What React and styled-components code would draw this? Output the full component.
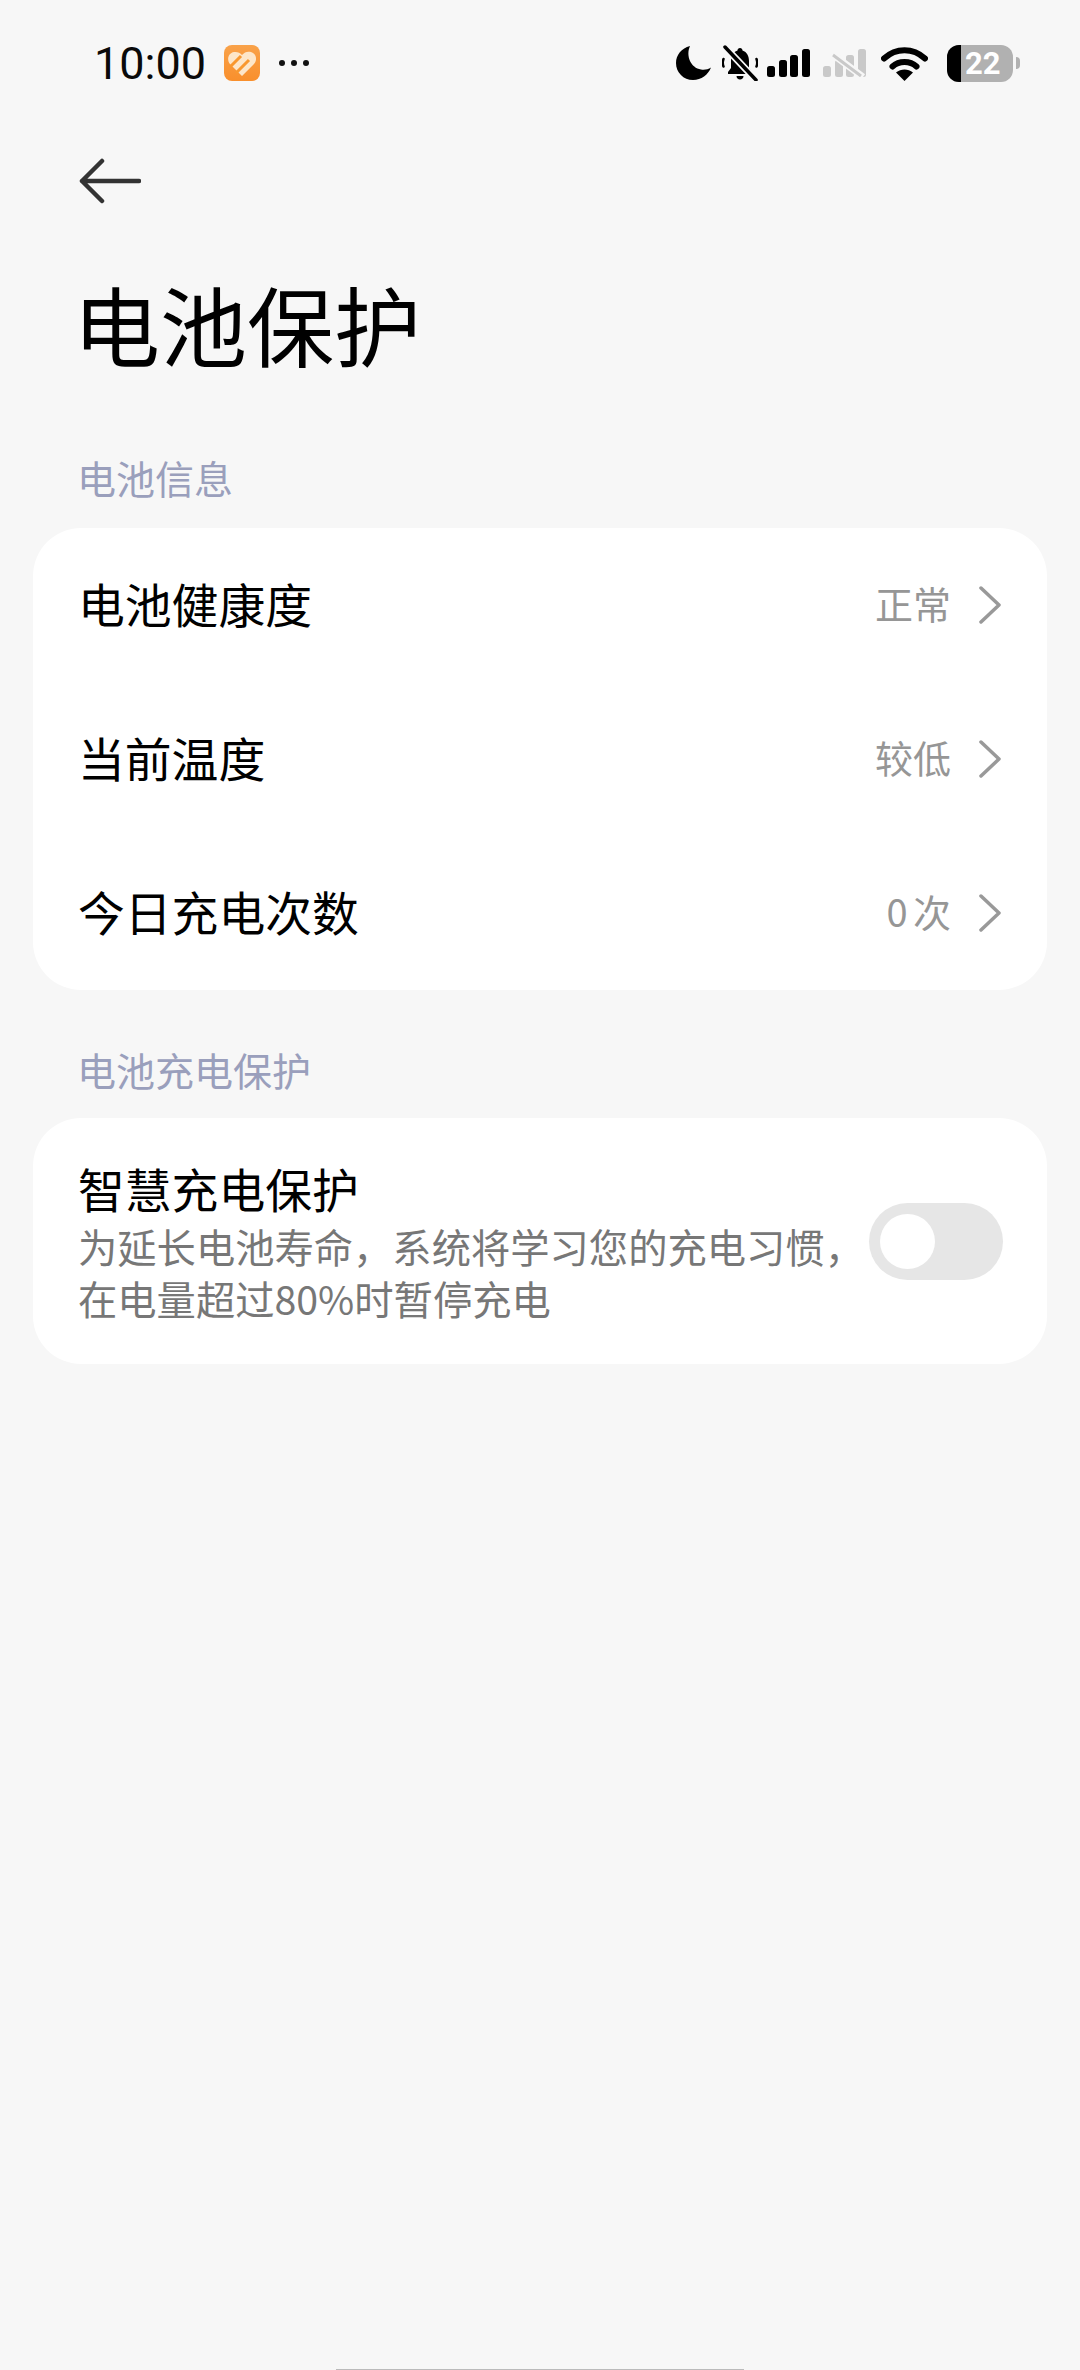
import styled, { createGlobalStyle } from 'styled-components';

const cjk = `"Noto Sans CJK SC", "Noto Sans", sans-serif`;

const GlobalStyle = createGlobalStyle`
  html, body {
    margin: 0;
    padding: 0;
    background: #f7f7f7;
  }
  * {
    box-sizing: border-box;
  }
`;

const Page = styled.div`
  position: relative;
  width: 1080px;
  height: 2370px;
  overflow: hidden;
  background: #f7f7f7;
  font-family: ${cjk};
`;

const StatusBar = styled.div`
  display: flex;
  align-items: center;
  height: 126px;
  padding: 0 60px 0 94px;
`;

const Clock = styled.span`
  font-family: Roboto, sans-serif;
  font-size: 45px;
  line-height: 1;
  color: #0a0a0a;
  width: 130px;
`;

const StatusRight = styled.div`
  display: flex;
  align-items: center;
  margin-left: auto;
`;

const StatusIcon = styled.svg`
  display: block;
  flex: none;
  margin-left: ${(p) => p.$gap || 0}px;
`;

const BatteryWrap = styled.div`
  display: flex;
  align-items: center;
  margin-left: 19px;
`;

const BatteryBody = styled.div`
  display: flex;
  width: 66px;
  height: 37px;
  border-radius: 12px;
  overflow: hidden;
  background: #b1b1b1;
`;

const BatteryLevel = styled.div`
  width: 14px;
  background: #000;
`;

const BatteryText = styled.span`
  font-family: Roboto, sans-serif;
  font-weight: 700;
  font-size: 31px;
  line-height: 37px;
  color: #fff;
  margin-left: 4px;
`;

const BatteryTip = styled.div`
  width: 4px;
  height: 12px;
  margin-left: 3px;
  background: #b1b1b1;
  border-radius: 0 6px 6px 0;
`;

const NavBar = styled.div`
  display: flex;
  align-items: center;
  height: 110px;
  padding-left: 79px;
`;

const Title = styled.h1`
  margin: 0;
  padding-left: 73px;
  height: 180px;
  font-size: 87px;
  line-height: 174px;
  font-weight: 400;
  color: #000;
`;

const SectionLabel = styled.div`
  padding: ${(p) => p.$top}px 0 ${(p) => p.$bottom}px 77px;
  font-size: 39px;
  line-height: 52px;
  color: #9a9fbc;
`;

const Card = styled.div`
  margin: 0 33px;
  background: #fff;
  border-radius: 48px;
`;

const Row = styled.div`
  display: flex;
  align-items: center;
  height: 154px;
  padding: 0 45px 0 45px;
`;

const RowTitle = styled.span`
  margin-bottom: 5px;
  font-size: 46.8px;
  line-height: 60px;
  color: #000;
`;

const RowValue = styled.span`
  margin-left: auto;
  margin-bottom: 5px;
  font-size: 38px;
  line-height: 52px;
  word-spacing: -3px;
  color: #969696;
`;

const Chevron = styled.svg`
  display: block;
  flex: none;
  margin-left: 27px;
`;

const ToggleRow = styled.div`
  display: flex;
  align-items: center;
  height: 246px;
  padding: 0 44px 0 45px;
`;

const ToggleText = styled.div`
  flex: 1;
  min-width: 0;
`;

const ToggleTitle = styled(RowTitle)`
  display: block;
  margin-bottom: 0;
`;

const ToggleDesc = styled.div`
  margin-top: 2px;
  font-size: 39.3px;
  line-height: 52px;
  color: #777;
`;

const Toggle = styled.div`
  display: flex;
  align-items: center;
  flex: none;
  width: 134px;
  height: 77px;
  padding-left: 11px;
  border-radius: 39px;
  background: #e6e6e6;
`;

const Knob = styled.div`
  width: 55px;
  height: 55px;
  border-radius: 50%;
  background: #fff;
`;

const GestureBar = styled.div`
  position: absolute;
  left: 336px;
  bottom: 0;
  width: 408px;
  height: 1px;
  background: #bbb;
`;

const HealthIcon = () => (
  <StatusIcon width="36" height="36" viewBox="0 0 36 36">
    <defs>
      <linearGradient id="healthBg" x1="0" y1="0" x2="0" y2="1">
        <stop offset="0" stopColor="#f9a24a" />
        <stop offset="1" stopColor="#f98f2c" />
      </linearGradient>
    </defs>
    <rect width="36" height="36" rx="8" fill="url(#healthBg)" />
    <path d="M18 31L6 19C2.500 15 4 8 10 7c3-.5 6 .5 8 3 2.500-3 5.500-4 9-3 5.500 1.500 6.500 8 3 12z" fill="#fde6c9" />
    <path d="M6 22L17 11M12 28L25 15" stroke="#f9982f" strokeWidth="3" fill="none" />
  </StatusIcon>
);

const MoreDots = () => (
  <StatusIcon $gap={18} width="32" height="8" viewBox="0 0 32 8">
    <circle cx="4" cy="4" r="3" fill="#111" />
    <circle cx="16" cy="4" r="3" fill="#111" />
    <circle cx="28" cy="4" r="3" fill="#111" />
  </StatusIcon>
);

const Moon = () => (
  <StatusIcon width="35" height="34" viewBox="0 0 35 34">
    <path d="M14 0C5.500 2 0 9 0 17c0 9.500 7.500 17 17 17 8.500 0 15-5 18-12.500-3 2-6.500 2.500-10 2C15 22 9.500 10 14 0z" fill="#000" />
  </StatusIcon>
);

const BellOff = () => (
  <StatusIcon $gap={11} width="36" height="36" viewBox="0 0 36 36">
    <path d="M18 3c-1.500 0-2.500 1-2.500 2.500C11 7 9 11 9 16v7l-3 4v2h24v-2l-3-4v-7c0-5-2-9-6.500-10.500C20.500 4 19.500 3 18 3z" fill="#000" />
    <path d="M14.500 31h7c0 2-1.500 3.500-3.500 3.500s-3.500-1.500-3.500-3.500z" fill="#000" />
    <path d="M1.500 14c-1 2.500-1 5 0 7.500M34.500 14c1 2.500 1 5 0 7.500" stroke="#000" strokeWidth="2.500" fill="none" strokeLinecap="round" />
    <path d="M2 1l32 34" stroke="#f7f7f7" strokeWidth="7" />
    <path d="M3 2l31 33" stroke="#000" strokeWidth="3.500" strokeLinecap="round" />
  </StatusIcon>
);

const SignalBars = ({ color, gap, crossed }) => (
  <StatusIcon $gap={gap} width="43" height="28" viewBox="0 0 43 28">
    <rect x="0" y="17" width="8" height="11" rx="2.500" fill={color} />
    <rect x="12" y="11" width="8" height="17" rx="2.500" fill={color} />
    <rect x="23" y="6" width="8" height="22" rx="2.500" fill={color} />
    <rect x="35" y="0" width="8" height="28" rx="2.500" fill={color} />
    {crossed && <path d="M8 4l32 24" stroke="#f7f7f7" strokeWidth="7" />}
    {crossed && <path d="M10 6l28 21" stroke={color} strokeWidth="3" />}
  </StatusIcon>
);

const Wifi = () => (
  <StatusIcon $gap={15} width="47" height="35" viewBox="0 0 47 35">
    <path d="M3 12.500C15 1.500 32 1.500 44 12.500" stroke="#000" strokeWidth="6" strokeLinecap="round" fill="none" />
    <path d="M11.500 20.500C18 14.500 29 14.500 35.500 20.500" stroke="#000" strokeWidth="6" strokeLinecap="round" fill="none" />
    <path d="M15 26.500c5-4 12-4 17 0L23.500 35z" fill="#000" />
  </StatusIcon>
);

const BackArrow = () => (
  <svg width="62" height="46" viewBox="0 0 62 46" style={{ display: 'block' }}>
    <path d="M23 3L3 23l20 20M3 23h57" stroke="#333" strokeWidth="4.500" fill="none" strokeLinecap="round" strokeLinejoin="round" />
  </svg>
);

const infoRows = [
  { title: '电池健康度', value: '正常' },
  { title: '当前温度', value: '较低' },
  { title: '今日充电次数', value: '0 次' },
];

const App = () => {
  return (
    <Page>
      <GlobalStyle />
      <StatusBar>
        <Clock>10:00</Clock>
        <HealthIcon />
        <MoreDots />
        <StatusRight>
          <Moon />
          <BellOff />
          <SignalBars color="#000" gap={9} />
          <SignalBars color="#c9c9c9" gap={13} crossed />
          <Wifi />
          <BatteryWrap>
            <BatteryBody>
              <BatteryLevel />
              <BatteryText>22</BatteryText>
            </BatteryBody>
            <BatteryTip />
          </BatteryWrap>
        </StatusRight>
      </StatusBar>

      <NavBar>
        <BackArrow />
      </NavBar>

      <Title>电池保护</Title>

      <SectionLabel $top={35} $bottom={25}>电池信息</SectionLabel>
      <Card>
        {infoRows.map((row) => (
          <Row key={row.title}>
            <RowTitle>{row.title}</RowTitle>
            <RowValue>{row.value}</RowValue>
            <Chevron width="24" height="38" viewBox="0 0 24 38">
              <path d="M3 2l18 17L3 36" stroke="#999" strokeWidth="3.500" fill="none" strokeLinecap="round" strokeLinejoin="round" />
            </Chevron>
          </Row>
        ))}
      </Card>

      <SectionLabel $top={53} $bottom={23}>电池充电保护</SectionLabel>
      <Card>
        <ToggleRow>
          <ToggleText>
            <ToggleTitle>智慧充电保护</ToggleTitle>
            <ToggleDesc>为延长电池寿命，系统将学习您的充电习惯，在电量超过80%时暂停充电</ToggleDesc>
          </ToggleText>
          <Toggle>
            <Knob />
          </Toggle>
        </ToggleRow>
      </Card>

      <GestureBar />
    </Page>
  );
};

export default App;
